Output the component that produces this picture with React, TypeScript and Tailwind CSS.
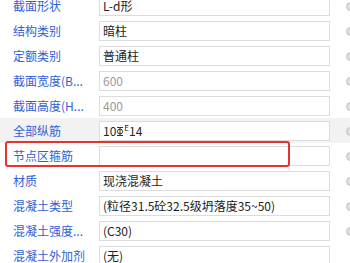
import React from "react";

type Row = {
  label: string;
  value?: React.ReactNode;
  muted?: boolean;
  active?: boolean;
  dot?: boolean;
};

// HRB400 rebar grade symbol
function RebarMark() {
  return (
    <svg width="8" height="11" viewBox="0 0 8 11" className="inline-block" aria-hidden>
      <g stroke="#333" strokeWidth="1" fill="none">
        <line x1="1" y1="1.5" x2="7" y2="1.5" />
        <line x1="1" y1="9.5" x2="7" y2="9.5" />
        <ellipse cx="4" cy="5.5" rx="2.6" ry="2.4" />
        <line x1="4" y1="1.5" x2="4" y2="9.5" />
      </g>
    </svg>
  );
}

const rows: Row[] = [
  { label: "截面形状", value: "L-d形", dot: true },
  { label: "结构类别", value: "暗柱", dot: true },
  { label: "定额类别", value: "普通柱", dot: true },
  { label: "截面宽度(B...", value: "600", muted: true, dot: true },
  { label: "截面高度(H...", value: "400", muted: true, dot: true },
  {
    label: "全部纵筋",
    value: (
      <span className="inline-flex items-center">
        10
        <RebarMark />
        <span className="text-[8px] leading-none -mt-[6px]">E</span>
        14
      </span>
    ),
    active: true,
    dot: true,
  },
  { label: "节点区箍筋", value: "", dot: true },
  { label: "材质", value: "现浇混凝土", dot: true },
  { label: "混凝土类型", value: "(粒径31.5砼32.5级坍落度35~50)", dot: true },
  { label: "混凝土强度...", value: "(C30)", dot: true },
  { label: "混凝土外加剂", value: "(无)" },
];

export default function App() {
  return (
    <div
      className="relative w-[350px] h-[263px] overflow-hidden bg-white text-[12px]"
      style={{ fontFamily: '"Noto Sans CJK SC", "Noto Sans", sans-serif' }}
    >
      <div className="-mt-[7px] flex flex-col">
        {rows.map((r, i) => (
          <div
            key={i}
            className={`flex h-[25px] items-start pt-[3px] ${r.active ? "bg-[#f2f2f2]" : ""}`}
          >
            <div className="w-[99px] shrink-0 h-[20px] flex items-center pl-[13px] text-[#2f5fd6] whitespace-nowrap">
              {r.label}
            </div>
            <div
              className={`w-[231px] h-[20px] shrink-0 border border-[#dcdcdc] bg-white flex items-center pl-[3px] whitespace-nowrap ${
                r.muted ? "text-[#9a9a9a]" : "text-[#222]"
              }`}
            >
              {r.value}
            </div>
            <div className="flex-1 h-[20px] flex items-center">
              {r.dot && (
                <span className="ml-[16px] w-[9px] h-[9px] shrink-0 rounded-full bg-[#dedede] border border-[#c4c4c4]" />
              )}
            </div>
          </div>
        ))}
      </div>
      <div className="absolute left-[5px] top-[141px] w-[285px] h-[26px] border-[2.5px] border-[#e8322c] rounded-[3px]" />
    </div>
  );
}
